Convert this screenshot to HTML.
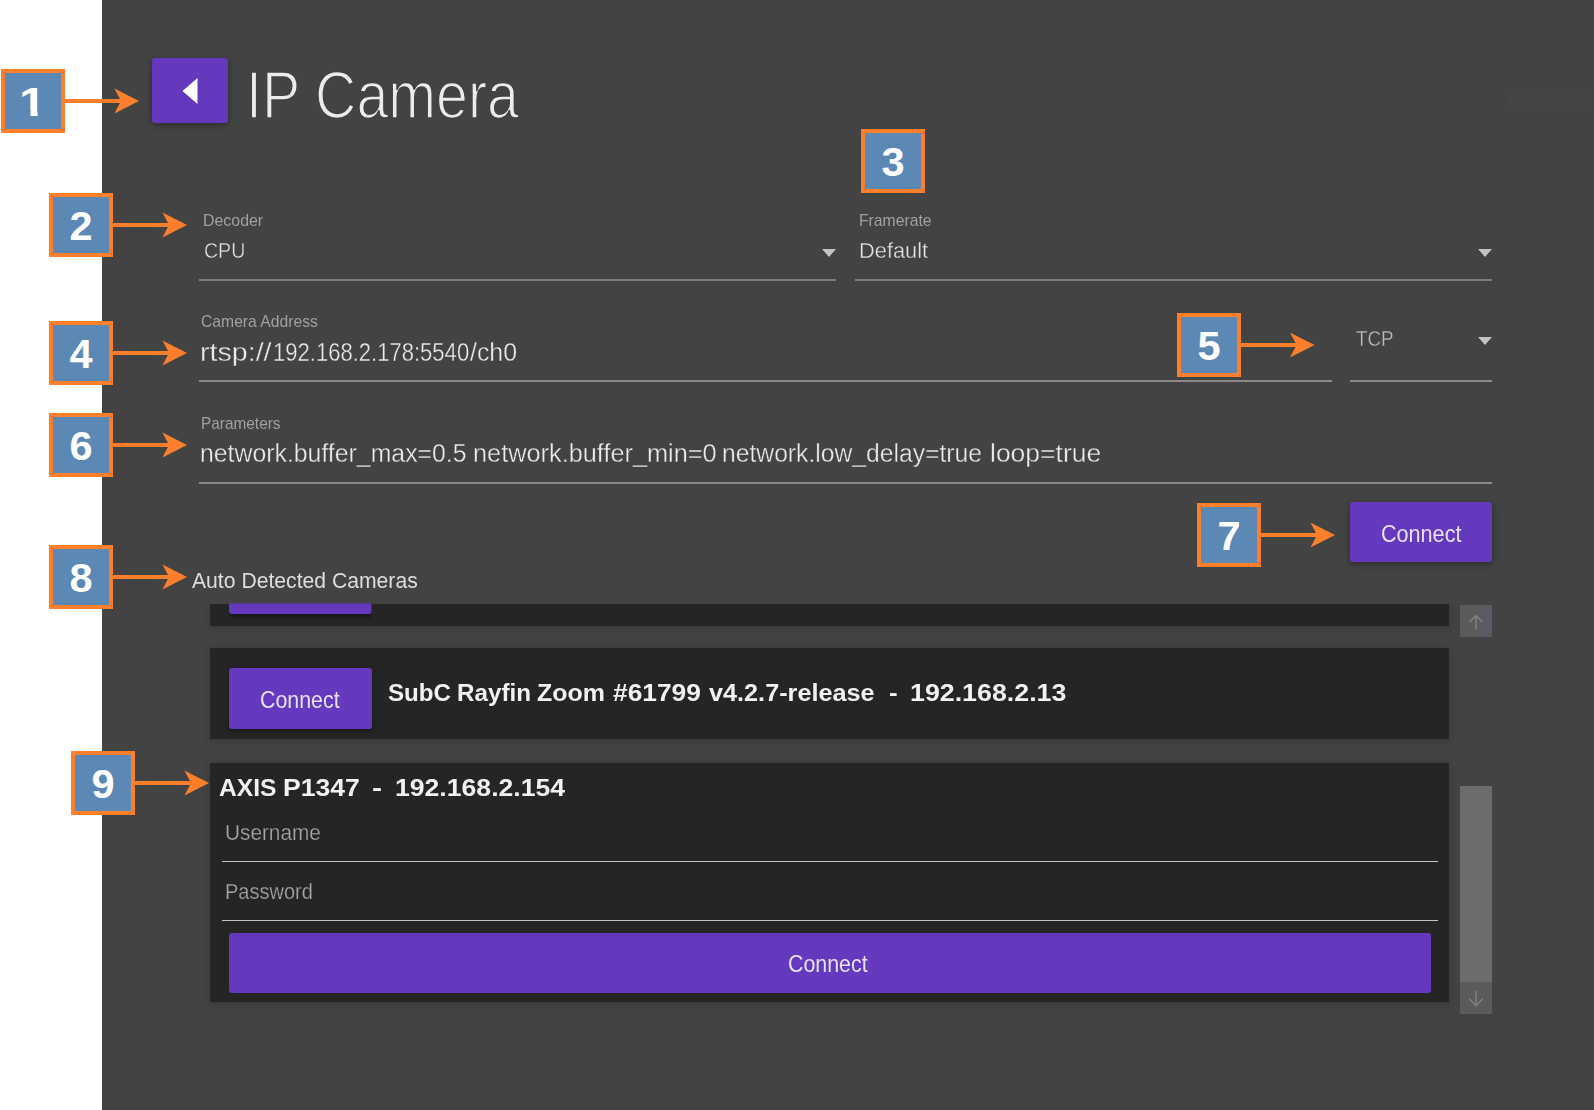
<!DOCTYPE html>
<html lang="en"><head><meta charset="utf-8"><title>IP Camera</title>
<style>
html,body{margin:0;padding:0;background:#fff;}
body{width:1594px;height:1110px;position:relative;overflow:hidden;font-family:"Liberation Sans",Arial,sans-serif;}
.app{position:absolute;left:102px;top:0;width:1492px;height:1110px;background:#434343;}
.t{position:absolute;white-space:nowrap;transform-origin:0 0;display:block;}
.ul{position:absolute;height:2px;background:#8a8a8a;}
.pur{position:absolute;background:#6439be;border-radius:3px;}
.row{position:absolute;background:#252525;box-shadow:0 1px 7px rgba(0,0,0,.2);}
.badge{position:absolute;width:56px;height:56px;border:4px solid #fd7f2c;background:#5b88b5;color:#fff;font-weight:700;font-size:41.5px;line-height:57px;text-align:center;}
.arrow{position:absolute;overflow:visible;}
.caret{position:absolute;width:0;height:0;border-left:7px solid transparent;border-right:7px solid transparent;border-top:8px solid #c4c4c4;}
.sb{position:absolute;left:1460px;width:32px;}
.t,.ul,.caret,.pur,.sb,.row,.soft{filter:blur(.55px);}
</style></head><body>
<div class="app"></div>
<!-- back button -->
<div class="pur" style="left:152px;top:58px;width:76px;height:65px;box-shadow:0 2px 6px rgba(0,0,0,.35);"></div>
<svg class="arrow soft" style="left:180px;top:76px" width="20" height="30" viewBox="0 0 20 30"><polygon points="2.5,15 17.5,2 17.5,28" fill="#fff"/></svg>
<div style="position:absolute;left:1508px;top:90px;width:86px;height:20px;background:#464445"></div>
<div class="ul" style="left:199px;top:279px;width:637px;background:#7c7c7c"></div>
<div class="ul" style="left:855px;top:279px;width:637px;background:#7c7c7c"></div>
<div class="ul" style="left:199px;top:380px;width:1133px;"></div>
<div class="ul" style="left:1350px;top:380px;width:142px;"></div>
<div class="ul" style="left:199px;top:482px;width:1293px;"></div>
<div class="caret" style="left:822px;top:249px"></div>
<div class="caret" style="left:1478px;top:249px"></div>
<div class="caret" style="left:1478px;top:337px"></div>
<div class="pur" style="left:1350px;top:502px;width:142px;height:60px;box-shadow:0 2px 6px rgba(0,0,0,.4);"></div>
<div class="row" style="left:210px;top:604px;width:1239px;height:22px;clip-path:inset(0 -12px -12px -12px);"></div>
<div class="pur" style="left:228.5px;top:594px;width:143px;height:20px;border-radius:0 0 3px 3px;clip-path:inset(9.5px 0 -6px 0);box-shadow:0 2px 4px rgba(0,0,0,.5);"></div>
<div class="row" style="left:210px;top:648px;width:1239px;height:91px;"></div>
<div class="pur" style="left:228.5px;top:668px;width:143px;height:60.5px;box-shadow:0 2px 4px rgba(0,0,0,.4);"></div>
<div class="row" style="left:210px;top:763px;width:1239px;height:239px;"></div>
<div class="ul" style="left:221.5px;top:860.5px;width:1216.5px;height:1.6px;background:#c2c2c2"></div>
<div class="ul" style="left:221.5px;top:919.5px;width:1216.5px;height:1.6px;background:#c2c2c2"></div>
<div class="pur" style="left:229px;top:932.5px;width:1202px;height:60.5px;"></div>
<div class="sb" style="top:605px;height:32px;background:linear-gradient(90deg,#5b5b5b 55%,#5c5a68 85%,#5a5a5f)"></div>
<div class="sb" style="top:786px;height:196px;background:#6c6c6c"></div>
<div class="sb" style="top:982px;height:32px;background:#5b5b5b"></div>
<svg class="arrow soft" style="left:1465.5px;top:612px" width="20" height="20" viewBox="0 0 20 20"><path d="M10 17.5V3.5M3.5 10L10 3.5l6.5 6.5" fill="none" stroke="#808480" stroke-width="1.4"/></svg>
<svg class="arrow soft" style="left:1465.5px;top:987.5px" width="20" height="20" viewBox="0 0 20 20"><path d="M10 3v14.5M3 10.5L10 17.5l7-7" fill="none" stroke="#7e7e7e" stroke-width="1.6"/></svg>
<div class="badge" style="left:1px;top:69px"><span id="one" style="display:inline-block;position:relative;left:-0.8px;transform:scaleX(1.18);clip-path:polygon(0 0,23.1px 0,23.1px 37.3px,15.9px 37.3px,15.9px 57.0px,9.8px 57.0px,9.8px 37.3px,0 37.3px);">1</span></div>
<svg class="arrow" style="left:65px;top:87px" width="75.0" height="28" viewBox="0 -14 75.0 28"><path d="M-1 -2H55.0L49.4 -12.4L74.0 0L49.4 12.4L55.0 2H-1Z" fill="#fd7f2c"/></svg>
<div class="badge" style="left:49px;top:193px">2</div>
<svg class="arrow" style="left:113px;top:211px" width="75.0" height="28" viewBox="0 -14 75.0 28"><path d="M-1 -2H55.0L49.4 -12.4L74.0 0L49.4 12.4L55.0 2H-1Z" fill="#fd7f2c"/></svg>
<div class="badge" style="left:861px;top:129px">3</div>
<div class="badge" style="left:49px;top:321px">4</div>
<svg class="arrow" style="left:113px;top:339px" width="75.0" height="28" viewBox="0 -14 75.0 28"><path d="M-1 -2H55.0L49.4 -12.4L74.0 0L49.4 12.4L55.0 2H-1Z" fill="#fd7f2c"/></svg>
<div class="badge" style="left:1177px;top:313px">5</div>
<svg class="arrow" style="left:1241px;top:331px" width="74.5" height="28" viewBox="0 -14 74.5 28"><path d="M-1 -2H54.5L48.9 -12.4L73.5 0L48.9 12.4L54.5 2H-1Z" fill="#fd7f2c"/></svg>
<div class="badge" style="left:49px;top:413px">6</div>
<svg class="arrow" style="left:113px;top:431px" width="75.0" height="28" viewBox="0 -14 75.0 28"><path d="M-1 -2H55.0L49.4 -12.4L74.0 0L49.4 12.4L55.0 2H-1Z" fill="#fd7f2c"/></svg>
<div class="badge" style="left:1197px;top:503px">7</div>
<svg class="arrow" style="left:1261px;top:521px" width="75.0" height="28" viewBox="0 -14 75.0 28"><path d="M-1 -2H55.0L49.4 -12.4L74.0 0L49.4 12.4L55.0 2H-1Z" fill="#fd7f2c"/></svg>
<div class="badge" style="left:49px;top:545px">8</div>
<svg class="arrow" style="left:113px;top:563px" width="75.0" height="28" viewBox="0 -14 75.0 28"><path d="M-1 -2H55.0L49.4 -12.4L74.0 0L49.4 12.4L55.0 2H-1Z" fill="#fd7f2c"/></svg>
<div class="badge" style="left:71px;top:751px">9</div>
<svg class="arrow" style="left:135px;top:769px" width="75.0" height="28" viewBox="0 -14 75.0 28"><path d="M-1 -2H55.0L49.4 -12.4L74.0 0L49.4 12.4L55.0 2H-1Z" fill="#fd7f2c"/></svg>
<span class="t" id="title" style="left:245.95px;top:62.21px;font-size:66.5px;line-height:66.5px;color:#ececec;font-weight:400;transform:scaleX(0.8617);-webkit-text-stroke:1.7px #434343;">IP Camera</span>
<span class="t" id="l_dec" style="left:203.10px;top:212.21px;font-size:17px;line-height:17px;color:#a0a0a0;font-weight:400;transform:scaleX(0.9365);">Decoder</span>
<span class="t" id="v_dec" style="left:204.06px;top:240.28px;font-size:22px;line-height:22px;color:#dedede;font-weight:400;transform:scaleX(0.8889);-webkit-text-stroke:.35px #434343;">CPU</span>
<span class="t" id="l_fr" style="left:859.31px;top:212.31px;font-size:17px;line-height:17px;color:#a0a0a0;font-weight:400;transform:scaleX(0.9250);">Framerate</span>
<span class="t" id="v_fr" style="left:859.02px;top:240.28px;font-size:22px;line-height:22px;color:#e4e4e4;font-weight:400;transform:scaleX(0.9912);-webkit-text-stroke:.35px #434343;">Default</span>
<span class="t" id="l_cam" style="left:201.08px;top:313.31px;font-size:17px;line-height:17px;color:#a0a0a0;font-weight:400;transform:scaleX(0.9232);">Camera Address</span>
<span class="t" id="c1" style="left:200.43px;top:340.34px;font-size:25px;line-height:25px;color:#ebebeb;font-weight:400;transform:scaleX(1.1443);-webkit-text-stroke:.35px #434343;">rtsp://</span>
<span class="t" id="c2" style="left:272.61px;top:340.34px;font-size:25px;line-height:25px;color:#ebebeb;font-weight:400;transform:scaleX(0.8818);-webkit-text-stroke:.35px #434343;">192.168.2.178:5540</span>
<span class="t" id="c3" style="left:470.20px;top:340.34px;font-size:25px;line-height:25px;color:#ebebeb;font-weight:400;transform:scaleX(0.9957);-webkit-text-stroke:.35px #434343;">/ch0</span>
<span class="t" id="v_tcp" style="left:1355.70px;top:328.18px;font-size:22px;line-height:22px;color:#bcbcbc;font-weight:400;transform:scaleX(0.8548);-webkit-text-stroke:.35px #434343;">TCP</span>
<span class="t" id="l_par" style="left:201.10px;top:414.91px;font-size:17px;line-height:17px;color:#a0a0a0;font-weight:400;transform:scaleX(0.9047);">Parameters</span>
<span class="t" id="n1" style="left:200.41px;top:441.14px;font-size:25px;line-height:25px;color:#ebebeb;font-weight:400;transform:scaleX(0.9929);-webkit-text-stroke:.35px #434343;">network.buffer_max=0.5</span>
<span class="t" id="n2" style="left:472.78px;top:441.14px;font-size:25px;line-height:25px;color:#ebebeb;font-weight:400;transform:scaleX(1.0126);-webkit-text-stroke:.35px #434343;">network.buffer_min=0</span>
<span class="t" id="n3" style="left:722.42px;top:441.14px;font-size:25px;line-height:25px;color:#ebebeb;font-weight:400;transform:scaleX(0.9874);-webkit-text-stroke:.35px #434343;">network.low_delay=true</span>
<span class="t" id="n4" style="left:989.91px;top:441.14px;font-size:25px;line-height:25px;color:#ebebeb;font-weight:400;transform:scaleX(1.0592);-webkit-text-stroke:.35px #434343;">loop=true</span>
<span class="t" id="b_top" style="left:1380.84px;top:523.23px;font-size:23px;line-height:23px;color:#e6dff6;font-weight:400;transform:scaleX(0.9388);">Connect</span>
<span class="t" id="h_auto" style="left:192.00px;top:569.58px;font-size:22px;line-height:22px;color:#dedede;font-weight:400;transform:scaleX(0.9615);">Auto Detected Cameras</span>
<span class="t" id="b_row" style="left:260.07px;top:689.23px;font-size:23px;line-height:23px;color:#e6dff6;font-weight:400;transform:scaleX(0.9294);">Connect</span>
<span class="t" id="s1" style="left:388.18px;top:682.33px;font-size:23px;line-height:23px;color:#f2f2f2;font-weight:700;transform:scaleX(1.0492);">SubC</span>
<span class="t" id="s2" style="left:456.74px;top:682.33px;font-size:23px;line-height:23px;color:#f2f2f2;font-weight:700;transform:scaleX(1.0529);">Rayfin</span>
<span class="t" id="s3" style="left:536.75px;top:682.33px;font-size:23px;line-height:23px;color:#f2f2f2;font-weight:700;transform:scaleX(1.0852);">Zoom</span>
<span class="t" id="s4" style="left:613.36px;top:682.33px;font-size:23px;line-height:23px;color:#f2f2f2;font-weight:700;transform:scaleX(1.1447);">#61799</span>
<span class="t" id="s5" style="left:708.63px;top:682.33px;font-size:23px;line-height:23px;color:#f2f2f2;font-weight:700;transform:scaleX(1.0974);">v4.2.7-release</span>
<span class="t" id="s6" style="left:888.57px;top:682.33px;font-size:23px;line-height:23px;color:#f2f2f2;font-weight:700;transform:scaleX(1.1286);">-</span>
<span class="t" id="s7" style="left:910.10px;top:682.33px;font-size:23px;line-height:23px;color:#f2f2f2;font-weight:700;transform:scaleX(1.1644);">192.168.2.13</span>
<span class="t" id="a1" style="left:218.93px;top:777.23px;font-size:23px;line-height:23px;color:#f2f2f2;font-weight:700;transform:scaleX(1.0692);">AXIS</span>
<span class="t" id="a2" style="left:282.55px;top:777.23px;font-size:23px;line-height:23px;color:#f2f2f2;font-weight:700;transform:scaleX(1.1547);">P1347</span>
<span class="t" id="a3" style="left:372.38px;top:777.23px;font-size:23px;line-height:23px;color:#f2f2f2;font-weight:700;transform:scaleX(1.3167);">-</span>
<span class="t" id="a4" style="left:394.55px;top:777.23px;font-size:23px;line-height:23px;color:#f2f2f2;font-weight:700;transform:scaleX(1.1562);">192.168.2.154</span>
<span class="t" id="p_user" style="left:225.08px;top:821.88px;font-size:22px;line-height:22px;color:#a6a6a6;font-weight:400;transform:scaleX(0.9444);-webkit-text-stroke:.25px #252525;">Username</span>
<span class="t" id="p_pass" style="left:225.14px;top:881.38px;font-size:22px;line-height:22px;color:#a6a6a6;font-weight:400;transform:scaleX(0.9096);-webkit-text-stroke:.25px #252525;">Password</span>
<span class="t" id="b_big" style="left:788.07px;top:953.33px;font-size:23px;line-height:23px;color:#e6dff6;font-weight:400;transform:scaleX(0.9294);">Connect</span>
</body></html>
